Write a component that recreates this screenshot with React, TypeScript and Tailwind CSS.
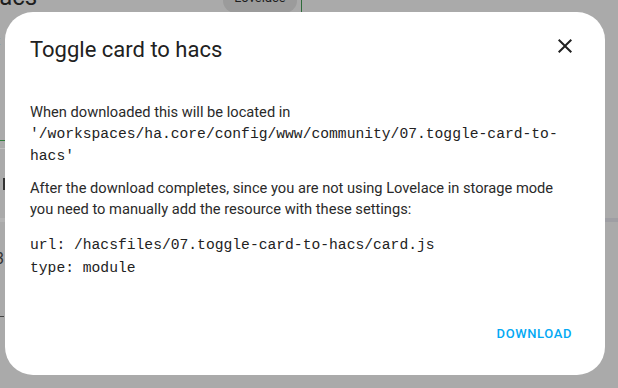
import React from "react";

const mono = { fontFamily: "'Liberation Mono', 'DejaVu Sans Mono', monospace" };

function BackdropPage() {
  return (
    <div className="absolute inset-0 flex flex-col pointer-events-none">
      {/* header row of the page */}
      <div className="h-[12px] flex items-start">
        <div className="w-[223px] h-[12px] overflow-hidden">
          <div className="-ml-[14px] -mt-[17px] text-[24px] leading-[28px] text-[#1e1e1e]">hacs</div>
        </div>
        <div className="w-[74px] h-[25px] -mt-[12px] rounded-full bg-[#9b9b9b] flex items-end justify-center pb-[8px]">
          <span className="text-[13px] leading-[14px] text-[#1e1e1e]">Lovelace</span>
        </div>
        <div className="w-[4px]" />
        <div className="w-px h-[12px] bg-[#2f6b3b]" />
      </div>
      {/* upper body */}
      <div className="h-[206px] flex">
        <div className="w-[8px] flex flex-col">
          <div className="h-[22px]" />
          <div className="h-[14px] -ml-[4px] text-[13px] leading-[14px] text-[#333]">t</div>
          <div className="h-[92px]" />
          <div className="h-px bg-[#2f7d3b]" />
          <div className="h-[7px]" />
          <div className="h-px bg-[#bdbdbd]" />
          <div className="h-[29px]" />
          <div className="ml-[3px] w-[2px] h-[12px] bg-[#333]" />
        </div>
      </div>
      {/* divider band of the page */}
      <div className="h-[4px] flex">
        <div className="flex-1 bg-[#b3b3b3]" />
        <div className="w-[13px] bg-[#9e9ea3]" />
      </div>
      {/* lower body */}
      <div className="flex-1 flex">
        <div className="w-[8px] flex flex-col">
          <div className="h-[28px]" />
          <div className="h-[18px] -ml-[5px] text-[16px] leading-[18px] text-[#333]">3</div>
          <div className="h-[48px]" />
          <div className="w-[4px] h-px bg-[#444]" />
        </div>
      </div>
    </div>
  );
}

export default function App() {
  return (
    <div
      className="relative w-[618px] h-[388px] overflow-hidden bg-[#aaaaaa]"
      style={{ fontFamily: "Roboto, 'Noto Sans', sans-serif" }}
    >
      <BackdropPage />

      {/* dialog */}
      <div className="absolute left-[5px] top-[12px] w-[600px] h-[363px] bg-white rounded-[28px] flex flex-col">
        <div className="flex items-start justify-between pl-[25px] pr-[16px] pt-[24px]">
          <h2 className="text-[22px] leading-[28px] text-[#212121] font-normal">Toggle card to hacs</h2>
          <button className="w-[48px] h-[48px] -mt-[14px] flex items-center justify-center text-[#212121]">
            <svg width="24" height="24" viewBox="0 0 24 24" fill="currentColor">
              <path d="M19 6.41L17.59 5 12 10.59 6.41 5 5 6.41 10.59 12 5 17.59 6.41 19 12 13.41 17.59 19 19 17.59 13.41 12z" />
            </svg>
          </button>
        </div>

        <div className="pl-[25px] pr-[24px] mt-[32px] text-[14.67px] leading-[21px] text-[#2a2a2a]">
          <p>
            When downloaded this will be located in
            <br />
            <code className="text-[14.67px] text-[#222]" style={mono}>
              '/workspaces/ha.core/config/www/community/07.toggle-card-to-
              <br />
              hacs'
            </code>
          </p>
          <p className="mt-[11px]">
            After the download completes, since you are not using Lovelace in storage mode
            <br />
            you need to manually add the resource with these settings:
          </p>
          <pre className="mt-[14px] text-[14.67px] leading-[23px] text-[#222]" style={mono}>
{`url: /hacsfiles/07.toggle-card-to-hacs/card.js
type: module`}
          </pre>
        </div>

        <div className="mt-auto flex justify-end pr-[25px] pb-[23px]">
          <button className="px-[8px] h-[36px] text-[13px] font-medium tracking-[0.6px] text-[#03a9f4]">
            DOWNLOAD
          </button>
        </div>
      </div>
    </div>
  );
}
